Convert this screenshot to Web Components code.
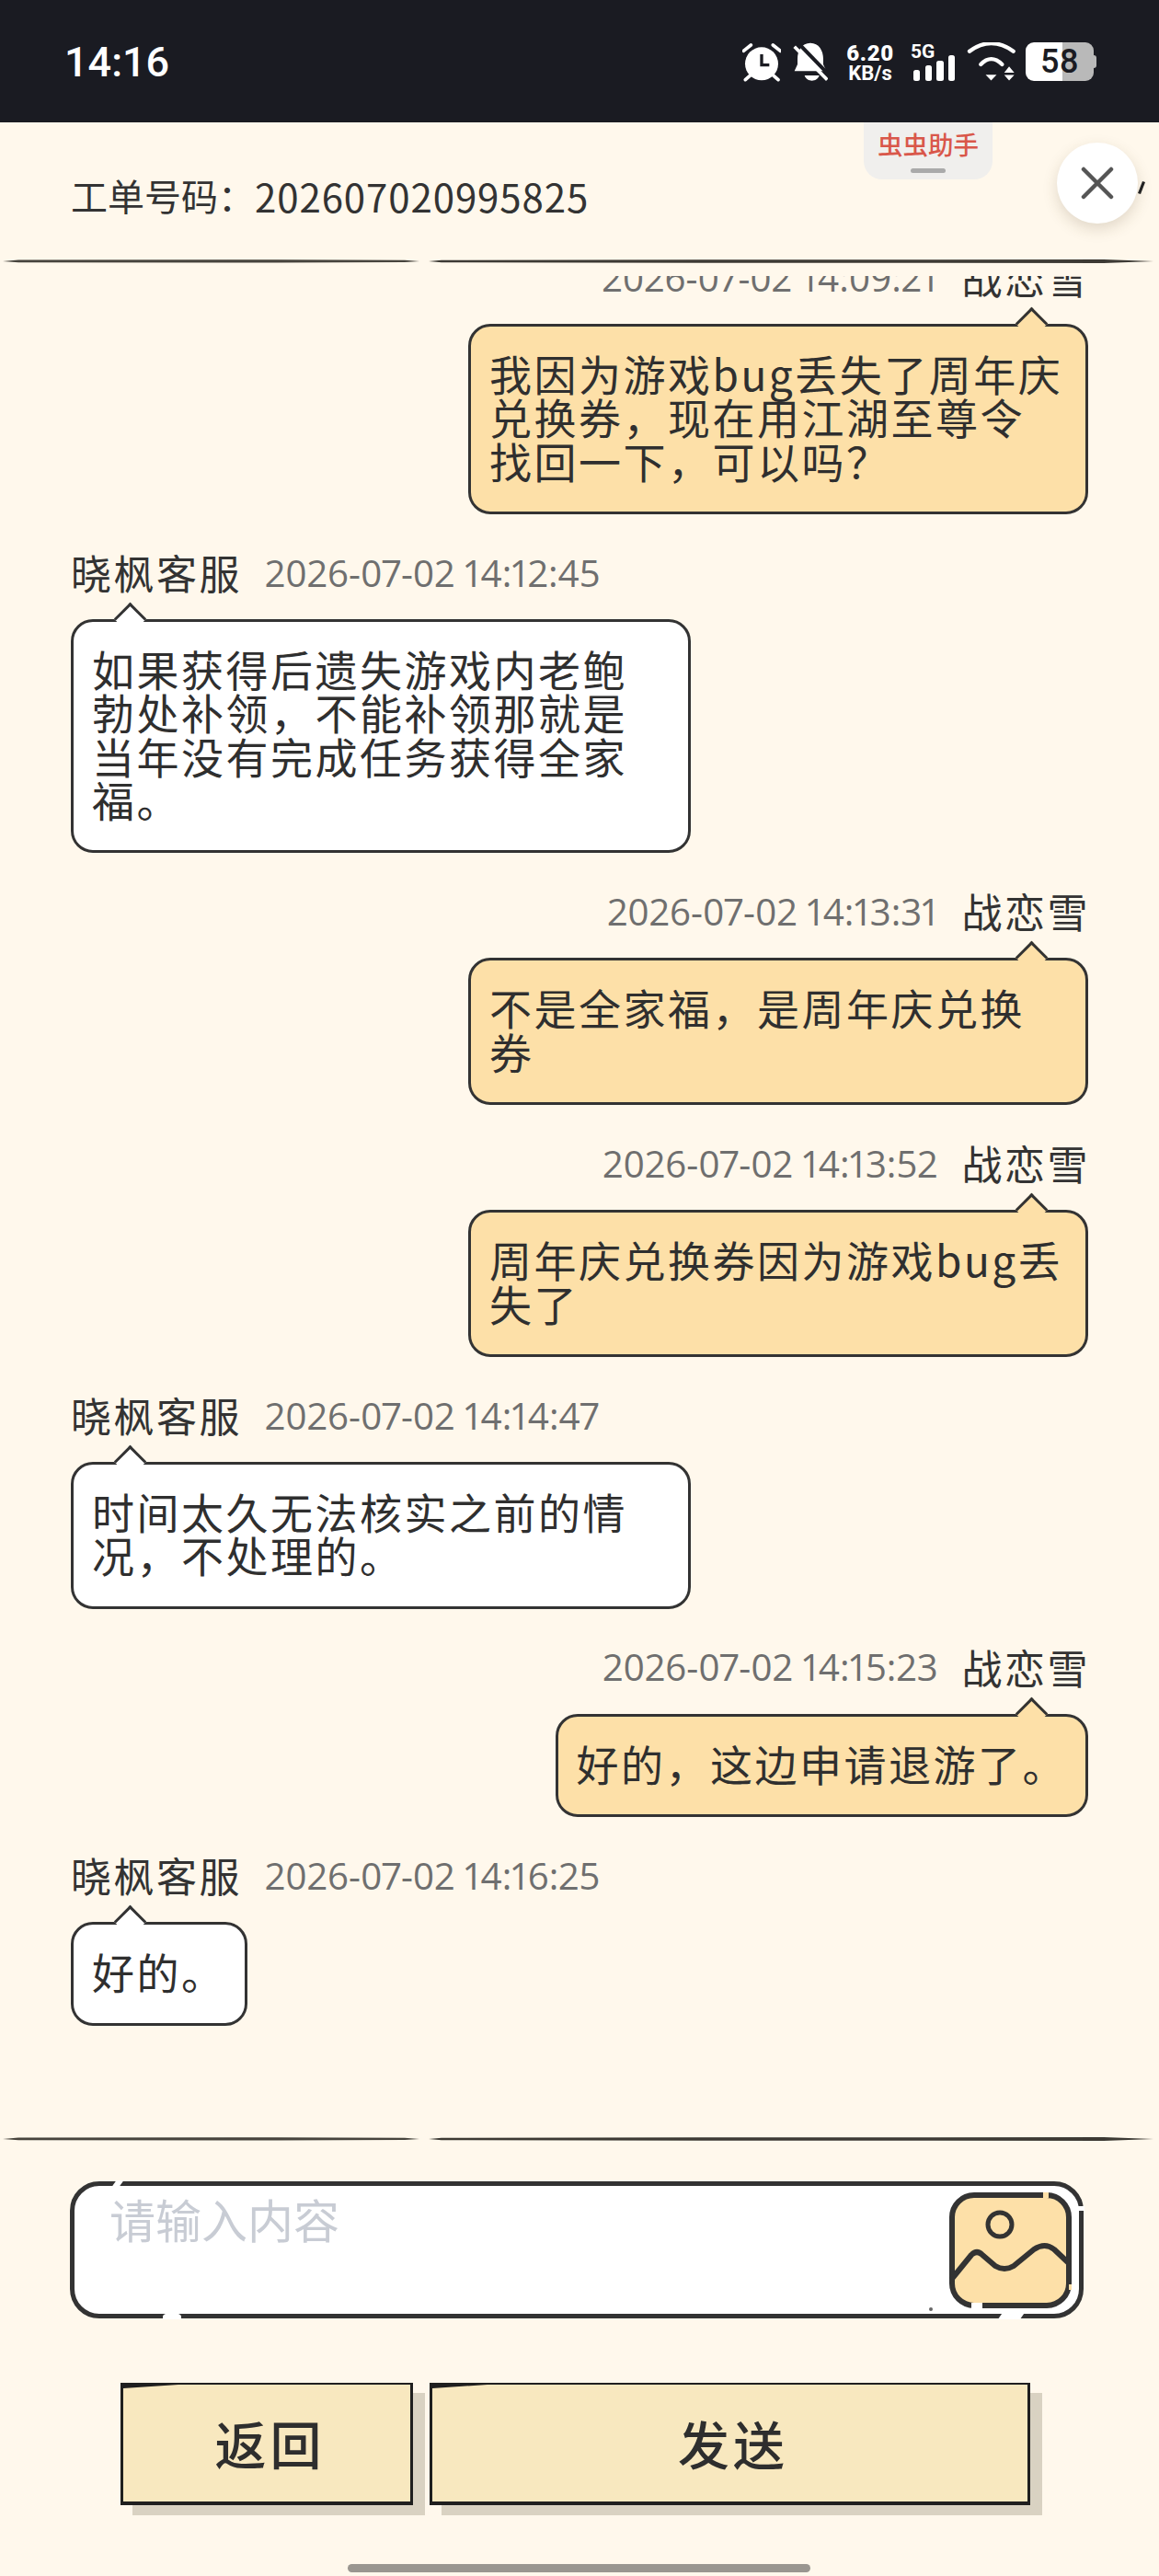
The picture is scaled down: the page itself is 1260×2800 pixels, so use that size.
<!DOCTYPE html>
<html lang="zh-CN">
<head>
<meta charset="utf-8">
<title>工单</title>
<style>
  html, body { margin: 0; background: #fff8ec; }
  body { font-family: "Noto Sans CJK SC", "Noto Sans", sans-serif; color: #2f2f2f; }
</style>
</head>
<body>
<ticket-page>
  <status-bar slot="top"></status-bar>
  <ticket-header slot="top" code="202607020995825"></ticket-header>
  <hand-rule slot="top"></hand-rule>

  <chat-message side="right" name="战恋雪" time="2026-07-02 14:09:21">我因为游戏bug丢失了周年庆兑换券，现在用江湖至尊令找回一下，可以吗？</chat-message>
  <chat-message side="left" name="晓枫客服" time="2026-07-02 14:12:45">如果获得后遗失游戏内老鲍勃处补领，不能补领那就是当年没有完成任务获得全家福。</chat-message>
  <chat-message side="right" name="战恋雪" time="2026-07-02 14:13:31">不是全家福，是周年庆兑换券</chat-message>
  <chat-message side="right" name="战恋雪" time="2026-07-02 14:13:52">周年庆兑换券因为游戏bug丢失了</chat-message>
  <chat-message side="left" name="晓枫客服" time="2026-07-02 14:14:47">时间太久无法核实之前的情况，不处理的。</chat-message>
  <chat-message side="right" name="战恋雪" time="2026-07-02 14:15:23">好的，这边申请退游了。</chat-message>
  <chat-message side="left" name="晓枫客服" time="2026-07-02 14:16:25">好的。</chat-message>

  <hand-rule slot="bottom"></hand-rule>
  <compose-box slot="bottom" placeholder="请输入内容"></compose-box>
  <button-row slot="bottom">
    <sketch-button style="width:318px">返回</sketch-button>
    <sketch-button style="width:653px">发送</sketch-button>
  </button-row>
  <home-bar slot="bottom"></home-bar>

  <helper-tab slot="float"></helper-tab>
  <close-button slot="float"></close-button>
</ticket-page>

<script>
function shadowFrom(host, html) {
  const tpl = document.createElement('template');
  tpl.innerHTML = html;
  host.attachShadow({ mode: 'open' });
  host.shadowRoot.appendChild(tpl.content.cloneNode(true));
}

class TicketPage extends HTMLElement {
  constructor() {
    super();
    shadowFrom(this, `
      <style>
        :host { display: flex; flex-direction: column; position: relative; width: 1260px; height: 2800px; overflow: hidden; background: #fff8ec; }
        .list { flex: 1; min-height: 0; overflow: hidden; margin-top: 13px; }
        .scroll { margin-top: -20px; display: flex; flex-direction: column; gap: 42.2px; padding: 0 77px; }
      </style>
      <slot name="top"></slot>
      <div class="list"><div class="scroll"><slot></slot></div></div>
      <slot name="bottom"></slot>
      <slot name="float"></slot>
    `);
  }
}

class StatusBar extends HTMLElement {
  constructor() {
    super();
    shadowFrom(this, `
      <style>
        :host { display: flex; align-items: flex-start; justify-content: space-between; height: 133px; background: #1a1b22; color: #fff; font-family: Roboto, "Noto Sans", sans-serif; }
        .time { font-size: 45px; font-weight: 500; line-height: 46px; margin: 45px 0 0 70px; }
        .icons { display: flex; align-items: flex-start; margin: 46px 67px 0 0; }
        svg { display: block; }
        .speed { width: 56px; margin-left: 18px; font-weight: 700; text-align: center; }
        .speed b { display: block; font-size: 24px; line-height: 22px; letter-spacing: .6px; margin-top: 1px; }
        .speed span { display: block; font-size: 22px; line-height: 20px; margin-top: 1px; }
        .net { position: relative; width: 48px; height: 42px; margin-left: 17px; }
        .net span { position: absolute; left: -1px; top: 0; font-size: 21px; line-height: 20px; font-weight: 700; }
        .batt { position: relative; width: 78px; height: 42px; margin-left: 11px; }
        .batt .cell { width: 74px; height: 42px; border-radius: 9px; background: linear-gradient(90deg, #fff 40px, #b9b9b9 40px); display: flex; align-items: center; justify-content: center; color: #1a1b22; font-size: 36px; font-weight: 500; letter-spacing: .5px; }
        .batt i { position: absolute; right: 1px; top: 14px; width: 3px; height: 14px; border-radius: 0 3px 3px 0; background: #b9b9b9; }
      </style>
      <div class="time">14:16</div>
      <div class="icons">
        <svg width="42" height="43" viewBox="78 76 126 129">
          <circle cx="141" cy="146" r="54" fill="#fff"/>
          <path d="M141 115V150H166" fill="none" stroke="#1a1b22" stroke-width="10"/>
          <path d="M82 104L106 85M178 85L202 104M88 198L106 182M195 198L177 182" stroke="#fff" stroke-width="11" stroke-linecap="round"/>
        </svg>
        <svg width="38" height="42" viewBox="243 78 114 126" style="margin-left:13px">
          <path d="M300 80C328 80 342 105 342 132V150L352 172H248L258 150V132C258 105 272 80 300 80Z" fill="#fff"/>
          <path d="M281 186H329C325 198 315 203 305 203S285 198 281 186Z" fill="#fff"/>
          <path d="M258 78L366 190" stroke="#1a1b22" stroke-width="12"/>
          <path d="M248 92L355 200" stroke="#fff" stroke-width="11"/>
        </svg>
        <div class="speed"><b>6.20</b><span>KB/s</span></div>
        <div class="net">
          <span>5G</span>
          <svg width="48" height="42" viewBox="0 0 48 42">
            <rect x="2" y="30" width="7" height="12" rx="2.5" fill="#fff"/>
            <rect x="15" y="25" width="7" height="17" rx="2.5" fill="#fff"/>
            <rect x="27" y="20" width="8" height="22" rx="2.5" fill="#fff"/>
            <rect x="40" y="14" width="7" height="28" rx="2.5" fill="#fff"/>
          </svg>
        </div>
        <svg width="53" height="42" viewBox="815 79 160 126" style="margin-left:12px">
          <path d="M824 108Q895 56 968 108" fill="none" stroke="#fff" stroke-width="13" stroke-linecap="round"/>
          <path d="M861 151Q895 116 931 151" fill="none" stroke="#fff" stroke-width="13" stroke-linecap="round"/>
          <path d="M877 185H913L895 204ZM938 178H971L954 158ZM938 186H971L954 204Z" fill="#fff"/>
        </svg>
        <div class="batt"><div class="cell">58</div><i></i></div>
      </div>
    `);
  }
}

class TicketHeader extends HTMLElement {
  constructor() {
    super();
    shadowFrom(this, `
      <style>
        :host { display: flex; align-items: center; height: 148px; padding: 10px 0 0 77px; box-sizing: border-box; font-size: 40px; color: #333; }
        .num { font-size: 42px; letter-spacing: .9px; }
      </style>
      工单号码：<span class="num"></span>
    `);
    this.shadowRoot.querySelector('.num').textContent = this.getAttribute('code');
  }
}

class HandRule extends HTMLElement {
  constructor() {
    super();
    shadowFrom(this, `
      <style>
        :host { display: block; height: 6px; }
        svg { display: block; filter: blur(.4px); }
      </style>
      <svg width="1260" height="6" viewBox="0 0 1260 6">
        <path d="M3 3L20 1.5L300 1.3L440 1.8L456 3L440 4L300 4.5L20 4.3Z" fill="#47443d"/>
        <path d="M466 3L480 1.7L800 1.3L1200 1L1254 3L1200 5L800 4.7L480 4.3Z" fill="#3d3a34"/>
      </svg>
    `);
  }
}

class ChatMessage extends HTMLElement {
  constructor() {
    super();
    shadowFrom(this, `
      <style>
        :host { display: flex; flex-direction: column; align-items: flex-start; }
        :host([side="right"]) { align-items: flex-end; }
        .head { display: flex; align-items: center; gap: 25px; height: 42px; margin-bottom: 30px; }
        :host([side="right"]) .head { flex-direction: row-reverse; gap: 26px; margin-right: -2px; }
        .name { font-size: 44px; letter-spacing: 2.5px; color: #333; }
        .time { font-family: "Open Sans", "Noto Sans", sans-serif; font-size: 40.3px; color: #6f6f6f; font-variant-numeric: proportional-nums; }
        .bubble { position: relative; box-sizing: border-box; max-width: 674px; padding: 27px 20px 32px; border: 3px solid #333; border-radius: 24px; background: #fff; font-size: 46px; line-height: 47.3px; letter-spacing: 2.5px; color: #2f2f2f; }
        :host([side="right"]) .bubble { background: #fde0a8; }
        .bubble::before { content: ""; position: absolute; top: -16px; left: 49px; width: 25px; height: 25px; box-sizing: border-box; background: inherit; border: solid #333; border-width: 3px 0 0 3px; transform: rotate(45deg); }
        :host([side="right"]) .bubble::before { left: auto; right: 46px; }
      </style>
      <div class="head"><span class="name"></span><span class="time"></span></div>
      <div class="bubble"><slot></slot></div>
    `);
    this.shadowRoot.querySelector('.name').textContent = this.getAttribute('name');
    this.shadowRoot.querySelector('.time').textContent = this.getAttribute('time');
  }
}

class ComposeBox extends HTMLElement {
  constructor() {
    super();
    shadowFrom(this, `
      <style>
        :host { display: block; position: relative; box-sizing: border-box; width: 1102px; height: 149px; margin: 43px 0 0 76px; padding: 4px 12px 10px 38px; border: 5px solid #333; border-radius: 32px; background: #fff; }
        .hint { font-size: 50px; line-height: 62px; color: #c8ccd4; }
        svg { position: absolute; right: 7px; top: 6px; display: block; }
        i { position: absolute; background: #fff; }
        .a { left: 43px; top: -6px; width: 8px; height: 7px; transform: skewX(-35deg); }
        .b { left: 96px; bottom: -6px; width: 20px; height: 7px; border-radius: 50% 50% 0 0; }
        .c { right: -6px; top: 22px; width: 7px; height: 5px; }
        .d { right: 62px; bottom: -6px; width: 24px; height: 6px; transform: skewX(-35deg); }
        .dot { left: 929px; bottom: 3px; width: 4px; height: 4px; border-radius: 50%; background: #666; }
      </style>
      <div class="hint"></div>
      <svg width="135" height="128" viewBox="-1 -1 135 128">
        <rect x="3" y="3" width="127" height="120" rx="24" fill="#fde0a8" stroke="#333" stroke-width="6"/>
        <ellipse cx="55" cy="35" rx="13" ry="13" fill="none" stroke="#333" stroke-width="5"/>
        <path d="M2 95L24 68Q30 62 36 68L50 80Q60 86 70 80L92 62Q104 54 114 62L131 78" fill="none" stroke="#333" stroke-width="6" stroke-linejoin="round"/>
        <path d="M102 0h6v6h-6zM130 100h3v6h-3z" fill="#fde0a8"/>
        <path d="M24 120h12v6h-12z" fill="#fff"/>
      </svg>
      <i class="a"></i><i class="b"></i><i class="c"></i><i class="d"></i><i class="dot"></i>
    `);
    this.shadowRoot.querySelector('.hint').textContent = this.getAttribute('placeholder');
  }
}

class ButtonRow extends HTMLElement {
  constructor() {
    super();
    shadowFrom(this, `
      <style>
        :host { display: flex; gap: 18px; margin: 70px 0 0 131px; }
      </style>
      <slot></slot>
    `);
  }
}

class SketchButton extends HTMLElement {
  constructor() {
    super();
    shadowFrom(this, `
      <style>
        :host { display: flex; position: relative; box-sizing: border-box; height: 133px; padding: 0 0 3px 7px; align-items: center; justify-content: center; border: solid #1f1f1f; border-width: 2px 3px 4px 3px; background: #f8e8bf; box-shadow: 13px 11px 0 #d9d2c2; font-size: 56px; font-weight: 500; letter-spacing: 4px; color: #2e2e2e; }
        :host::before { content: ""; position: absolute; left: 0; top: 0; width: 60px; height: 4px; background: #1f1f1f; clip-path: polygon(0 0, 100% 0, 0 100%); }
      </style>
      <slot></slot>
    `);
  }
}

class HomeBar extends HTMLElement {
  constructor() {
    super();
    shadowFrom(this, `
      <style>
        :host { display: block; height: 9px; width: 503px; margin: 64px 0 4px 378px; border-radius: 5px; background: #9a9690; }
      </style>
    `);
  }
}

class HelperTab extends HTMLElement {
  constructor() {
    super();
    shadowFrom(this, `
      <style>
        :host { position: absolute; left: 939px; top: 133px; display: flex; flex-direction: column; align-items: center; width: 140px; height: 62px; border-radius: 0 0 20px 20px; background: #f0efed; color: #d9574a; font-size: 27.5px; font-weight: 500; }
        .grip { width: 38px; height: 5px; margin-top: 9px; border-radius: 3px; background: #aaa; }
        .txt { margin-top: 3px; line-height: 40px; height: 38px; }
      </style>
      <div class="txt">虫虫助手</div>
      <div class="grip"></div>
    `);
  }
}

class CloseButton extends HTMLElement {
  constructor() {
    super();
    shadowFrom(this, `
      <style>
        :host { position: absolute; left: 1149px; top: 155px; width: 88px; height: 88px; border-radius: 50%; background: #fff; box-shadow: 0 6px 16px rgba(90, 70, 40, .18); display: flex; align-items: center; justify-content: center; }
        svg { display: block; }
        .sliver { position: absolute; left: 88px; top: 41px; }
      </style>
      <svg width="36" height="36" viewBox="0 0 36 36"><path d="M3 3L33 33M33 3L3 33" stroke="#555" stroke-width="4.5" stroke-linecap="round"/></svg>
      <svg class="sliver" width="9" height="16" viewBox="0 0 9 16"><path d="M5 1L8 2L3 15L0 14Z" fill="#222"/></svg>
    `);
  }
}

customElements.define('ticket-page', TicketPage);
customElements.define('status-bar', StatusBar);
customElements.define('ticket-header', TicketHeader);
customElements.define('hand-rule', HandRule);
customElements.define('chat-message', ChatMessage);
customElements.define('compose-box', ComposeBox);
customElements.define('button-row', ButtonRow);
customElements.define('sketch-button', SketchButton);
customElements.define('home-bar', HomeBar);
customElements.define('helper-tab', HelperTab);
customElements.define('close-button', CloseButton);
</script>
</body>
</html>
